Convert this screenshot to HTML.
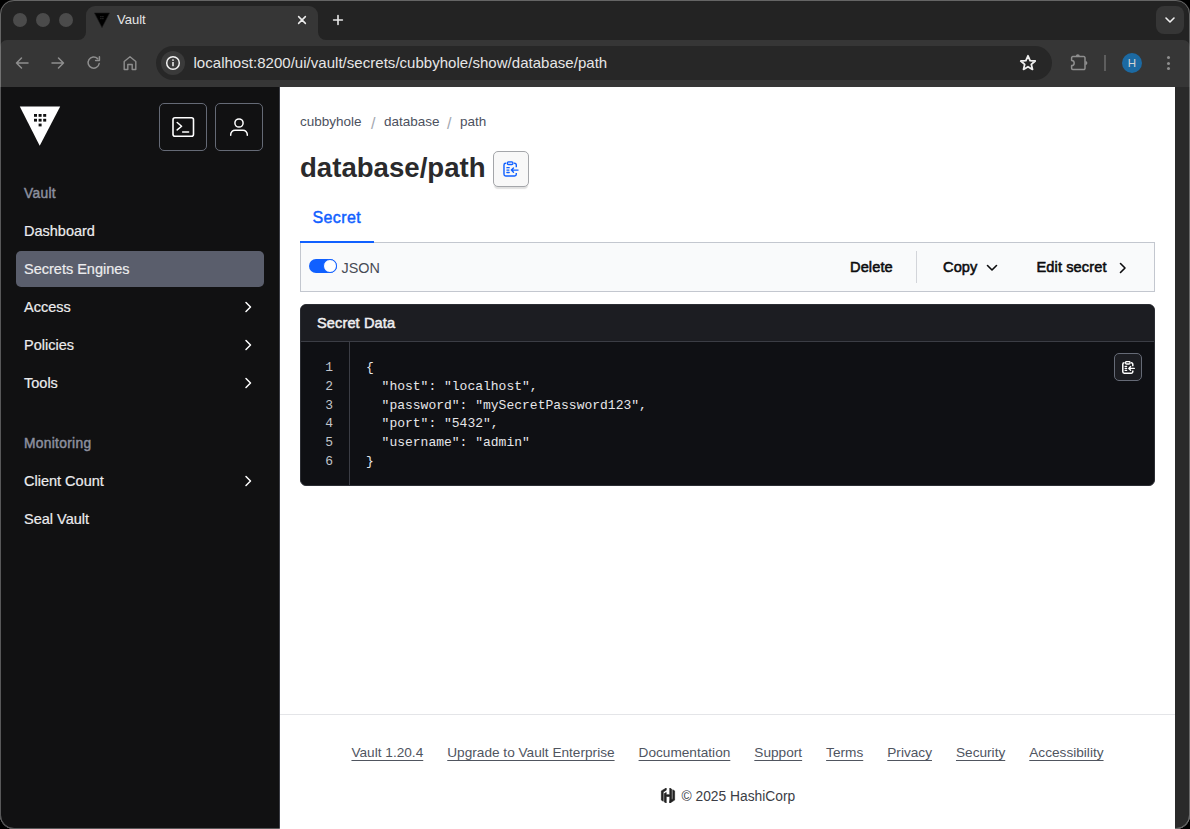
<!DOCTYPE html>
<html><head><meta charset="utf-8">
<style>
*{box-sizing:border-box;margin:0;padding:0}
html,body{width:1190px;height:829px;overflow:hidden;background:#000;font-family:"Liberation Sans",sans-serif}
.abs{position:absolute}
#win{position:absolute;left:0;top:0;width:1190px;height:829px;border-radius:14px;overflow:hidden;background:#232323}
#frame{position:absolute;left:0;top:0;width:1190px;height:829px;border-radius:14px;border:1px solid rgba(255,255,255,0.3);z-index:50;pointer-events:none}
#strip{position:absolute;left:0;top:0;width:1190px;height:39px;background:#232323}
#toolbar{position:absolute;left:0;top:40px;width:1190px;height:47px;background:#363636}
.dot{position:absolute;top:13px;width:14px;height:14px;border-radius:50%;background:#4b4b4b}
#tab{position:absolute;left:86px;top:6px;width:232px;height:34px;background:#363636;border-radius:9px 9px 0 0}
#omni{position:absolute;left:156px;top:46px;width:896px;height:34px;border-radius:17px;background:#272727}
#page{position:absolute;left:0;top:87px;width:1190px;height:742px;background:#fff}
#side{position:absolute;left:0;top:87px;width:280px;height:742px;background:#111112;border-right:1px solid #3b3d45}
#rstrip{position:absolute;left:1175px;top:87px;width:15px;height:742px;background:#2a2a2a}
.nav{position:absolute;left:24px;font-size:14.5px;color:#ececee;line-height:18px;-webkit-text-stroke:0.2px #ececee}
.chev{position:absolute;left:243px;width:10px;height:16px}
.sect{position:absolute;left:24px;font-size:13.8px;line-height:16px;color:#8c909f;-webkit-text-stroke:0.45px #8c909f;letter-spacing:0.3px}
</style></head><body>
<div id="win">
  <div id="strip"></div>
  <div id="toolbar"></div>
  <div class="dot" style="left:13px"></div>
  <div class="dot" style="left:36px"></div>
  <div class="dot" style="left:59px"></div>
  <div id="tab"></div>
  <div class="abs" style="left:78px;top:32px;width:8px;height:8px;background:#363636"></div>
  <div class="abs" style="left:78px;top:32px;width:8px;height:8px;background:#232323;border-bottom-right-radius:8px"></div>
  <div class="abs" style="left:318px;top:32px;width:8px;height:8px;background:#363636"></div>
  <div class="abs" style="left:318px;top:32px;width:8px;height:8px;background:#232323;border-bottom-left-radius:8px"></div>
  <div class="abs" style="left:0px;top:40px;width:8px;height:8px;background:#232323"></div>
  <div class="abs" style="left:0px;top:40px;width:8px;height:8px;background:#363636;border-top-left-radius:7px"></div>
  <div class="abs" style="left:1182px;top:40px;width:8px;height:8px;background:#232323"></div>
  <div class="abs" style="left:1182px;top:40px;width:8px;height:8px;background:#363636;border-top-right-radius:7px"></div>

  <div id="omni"></div>

  <!-- tab -->
  <svg class="abs" style="left:94px;top:12px" width="16" height="16" viewBox="0 0 16 16"><path d="M0.5 1 L15.5 1 L8 15.5 Z" fill="#000" stroke="#1a1a1a" stroke-width="0.6"/><rect x="6.3" y="4" width="1.2" height="1.2" fill="#2c2c2c"/><rect x="8.3" y="4" width="1.2" height="1.2" fill="#2c2c2c"/><rect x="6.3" y="6" width="1.2" height="1.2" fill="#2c2c2c"/><rect x="8.3" y="6" width="1.2" height="1.2" fill="#2c2c2c"/></svg>
  <div id="tabtitle" class="abs" style="left:117px;top:12px;font-size:13px;line-height:16px;color:#e6e6e6">Vault</div>
  <svg class="abs" style="left:296px;top:14px" width="12" height="12" viewBox="0 0 12 12"><path d="M2.6 2.6 L9.4 9.4 M9.4 2.6 L2.6 9.4" stroke="#ececec" stroke-width="1.5" stroke-linecap="round"/></svg>
  <svg class="abs" style="left:331px;top:13px" width="14" height="14" viewBox="0 0 14 14"><path d="M7 2.6 V11.4 M2.6 7 H11.4" stroke="#e8e8e8" stroke-width="1.6" stroke-linecap="round"/></svg>
  <div class="abs" style="left:1156px;top:6px;width:28px;height:28px;border-radius:8px;background:#363636"></div>
  <svg class="abs" style="left:1164px;top:15px" width="12" height="10" viewBox="0 0 12 10"><path d="M2 3 L6 7 L10 3" stroke="#f0f0f0" stroke-width="1.6" fill="none" stroke-linecap="round" stroke-linejoin="round"/></svg>
  <!-- nav -->
  <svg class="abs" style="left:14px;top:55px" width="16" height="16" viewBox="0 0 16 16"><path d="M14 8 H2.5 M7.5 3 L2.5 8 L7.5 13" stroke="#8e8e8e" stroke-width="1.5" fill="none" stroke-linecap="round" stroke-linejoin="round"/></svg>
  <svg class="abs" style="left:50px;top:55px" width="16" height="16" viewBox="0 0 16 16"><path d="M2 8 H13.5 M8.5 3 L13.5 8 L8.5 13" stroke="#8e8e8e" stroke-width="1.5" fill="none" stroke-linecap="round" stroke-linejoin="round"/></svg>
  <svg class="abs" style="left:86px;top:55px" width="16" height="16" viewBox="0 0 16 16"><path d="M13.2 8.5 A5.6 5.6 0 1 1 11.6 3.6" stroke="#8e8e8e" stroke-width="1.5" fill="none" stroke-linecap="round"/><path d="M13.4 1.8 V5.6 H9.6" stroke="#8e8e8e" stroke-width="1.5" fill="none" stroke-linecap="round" stroke-linejoin="round"/></svg>
  <svg class="abs" style="left:122px;top:55px" width="16" height="16" viewBox="0 0 16 16"><path d="M2.2 14.5 V6.5 L8 1.8 L13.8 6.5 V14.5 H10.2 V9.5 H5.8 V14.5 Z" stroke="#8e8e8e" stroke-width="1.4" fill="none" stroke-linejoin="round"/></svg>
  <!-- omnibox -->
  <div class="abs" style="left:161px;top:51px;width:24px;height:24px;border-radius:12px;background:#3a3a3a"></div>
  <svg class="abs" style="left:165px;top:55px" width="16" height="16" viewBox="0 0 16 16"><circle cx="8" cy="8" r="6.3" stroke="#f2f2f2" stroke-width="1.5" fill="none"/><rect x="7.25" y="7" width="1.5" height="4.2" fill="#f2f2f2"/><circle cx="8" cy="5.1" r="0.9" fill="#f2f2f2"/></svg>
  <div id="url" class="abs" style="left:193.5px;top:54px;font-size:15px;letter-spacing:0.03px;line-height:18px;color:#e6e6e6;white-space:nowrap">localhost:8200/ui/vault/secrets/cubbyhole/show/database/path</div>
  <svg class="abs" style="left:1019px;top:54px" width="18" height="18" viewBox="0 0 18 18"><path d="M9 1.8 L11.1 6.6 L16.2 7.0 L12.3 10.4 L13.5 15.4 L9 12.7 L4.5 15.4 L5.7 10.4 L1.8 7.0 L6.9 6.6 Z" stroke="#f0f0f0" stroke-width="1.8" fill="none" stroke-linejoin="round"/></svg>
  <!-- right icons -->
  <svg class="abs" style="left:1064px;top:48px" width="30" height="30" viewBox="0 0 30 30"><path d="M8.8 8.6 H19.8 A1.2 1.2 0 0 1 21 9.8 V20.3 A1.2 1.2 0 0 1 19.8 21.5 H8.8 A1.2 1.2 0 0 1 7.6 20.3 V17.6 A2.6 2.6 0 0 0 7.6 12.4 V9.8 A1.2 1.2 0 0 1 8.8 8.6 Z" stroke="#8e8e8e" stroke-width="1.5" fill="none" stroke-linejoin="round"/><path d="M11.8 8.2 A2 2 0 0 1 15.8 8.2 Z" fill="#8e8e8e"/><path d="M21.4 13 A2 2 0 0 1 21.4 17 Z" fill="#8e8e8e"/></svg>
  <div class="abs" style="left:1104px;top:55px;width:2px;height:16px;background:#5e5e5e"></div>
  <div class="abs" style="left:1122px;top:53px;width:20px;height:20px;border-radius:10px;background:#1c6aa3"></div>
  <div class="abs" style="left:1122px;top:56px;width:20px;text-align:center;font-size:11.5px;line-height:14px;color:#d4d4d4">H</div>
  <div class="abs" style="left:1166.5px;top:55.8px;width:3px;height:3px;border-radius:2px;background:#8e8e8e"></div>
  <div class="abs" style="left:1166.5px;top:61.5px;width:3px;height:3px;border-radius:2px;background:#8e8e8e"></div>
  <div class="abs" style="left:1166.5px;top:67.2px;width:3px;height:3px;border-radius:2px;background:#8e8e8e"></div>
  <div id="page"></div>
  <div id="side"></div>
  <!-- main content -->
  <div id="bc1" class="abs" style="left:300px;top:113px;font-size:13.5px;line-height:17px;color:#4c515e">cubbyhole</div>
  <div id="bcs1" class="abs" style="left:371px;top:113.5px;font-size:16px;line-height:20px;color:#a3a7b0">/</div>
  <div id="bc2" class="abs" style="left:384px;top:113px;font-size:13.5px;line-height:17px;color:#4c515e">database</div>
  <div id="bcs2" class="abs" style="left:447px;top:113.5px;font-size:16px;line-height:20px;color:#a3a7b0">/</div>
  <div id="bc3" class="abs" style="left:460px;top:113px;font-size:13.5px;line-height:17px;color:#4c515e">path</div>
  <div id="title" class="abs" style="left:300px;top:152.3px;font-size:27.6px;line-height:32px;font-weight:bold;color:#2a2a2c">database/path</div>
  <div class="abs" style="left:492.5px;top:151px;width:36px;height:36px;border:1.2px solid #a4a6aa;border-radius:5px;background:#f8f8f8;box-shadow:0 3px 1px -1px rgba(0,0,0,0.12)"></div>
  <svg class="abs" style="left:503.2px;top:160.6px" width="16" height="16" viewBox="0 0 13 13"><path d="M2.6 1.8 H2.2 A1.4 1.4 0 0 0 0.8 3.2 V10.8 A1.4 1.4 0 0 0 2.2 12.2 H9.4 A1.4 1.4 0 0 0 10.8 10.8 V9.8 M10.8 5.0 V3.2 A1.4 1.4 0 0 0 9.4 1.8 H9" stroke="#1060ff" stroke-width="1.15" fill="none"/><rect x="3.5" y="0.7" width="4.6" height="2.2" rx="1" stroke="#1060ff" stroke-width="1.1" fill="#c8d8ff"/><path d="M3.2 5.4 H5.0 M3.2 7.4 H4.8 M3.2 9.4 H5.0 M12.2 7.4 H6.8 M8.5 5.7 L6.8 7.4 L8.5 9.1" stroke="#1060ff" stroke-width="1.15" fill="none" stroke-linecap="round" stroke-linejoin="round"/></svg>
  <div id="tabsecret" class="abs" style="left:312.5px;top:208px;font-size:16px;line-height:19px;color:#1060ff;-webkit-text-stroke:0.45px #1060ff;letter-spacing:0.4px">Secret</div>
  <div class="abs" style="left:300px;top:242px;width:855px;height:50px;background:#f9fafb;border:1px solid #c3c7cf"></div>
  <div class="abs" style="left:300px;top:240.5px;width:74px;height:2.5px;background:#1060ff"></div>
  <div class="abs" style="left:309px;top:258.5px;width:28px;height:14px;border-radius:7px;background:#1060ff"></div>
  <div class="abs" style="left:323px;top:258.5px;width:14px;height:14px;border-radius:7px;background:#fff;border:1px solid #1060ff"></div>
  <div id="json" class="abs" style="left:341.5px;top:258.5px;font-size:14.4px;line-height:18px;color:#474b55">JSON</div>
  <div id="del" class="abs" style="left:850px;top:258px;font-size:14.6px;line-height:18px;color:#0c0c0e;-webkit-text-stroke:0.55px #0c0c0e;letter-spacing:0.1px">Delete</div>
  <div class="abs" style="left:916px;top:251px;width:1px;height:32px;background:#d3d5da"></div>
  <div id="copy" class="abs" style="left:943px;top:258px;font-size:14.6px;line-height:18px;color:#0c0c0e;-webkit-text-stroke:0.55px #0c0c0e;letter-spacing:0.1px">Copy</div>
  <svg class="abs" style="left:984px;top:260px" width="16" height="16" viewBox="0 0 16 16"><path d="M3.5 5.5 L8 10 L12.5 5.5" stroke="#0c0c0e" stroke-width="1.6" fill="none" stroke-linecap="round" stroke-linejoin="round"/></svg>
  <div id="edit" class="abs" style="left:1036.5px;top:258px;font-size:14.6px;line-height:18px;color:#0c0c0e;-webkit-text-stroke:0.55px #0c0c0e;letter-spacing:0.1px">Edit secret</div>
  <svg class="abs" style="left:1115px;top:260px" width="16" height="16" viewBox="0 0 16 16"><path d="M5.5 3.5 L10 8 L5.5 12.5" stroke="#0c0c0e" stroke-width="1.6" fill="none" stroke-linecap="round" stroke-linejoin="round"/></svg>
  <!-- card -->
  <div class="abs" style="left:300px;top:304px;width:855px;height:182px;border-radius:6px;background:#0f1014;overflow:hidden;border:1px solid #2b2d33">
    <div class="abs" style="left:0;top:0;width:855px;height:37px;background:#1c1d22;border-bottom:1px solid #3b3d45"></div>
    <div class="abs" style="left:48px;top:37px;width:1px;height:150px;background:#3b3d45"></div>
  </div>
  <div id="sd" class="abs" style="left:317px;top:314px;font-size:14.6px;line-height:18px;color:#efeff1;-webkit-text-stroke:0.5px #efeff1;letter-spacing:0.1px">Secret Data</div>
  <div id="lnums" class="abs" style="left:300px;top:359px;width:33px;text-align:right;font-family:'Liberation Mono',monospace;font-size:13px;line-height:18.75px;color:#c2c5cb;white-space:pre">1
2
3
4
5
6</div>
  <div id="code" class="abs" style="left:366px;top:359px;font-family:'Liberation Mono',monospace;font-size:13px;line-height:18.75px;color:#e6e6e9;white-space:pre">{
  "host": "localhost",
  "password": "mySecretPassword123",
  "port": "5432",
  "username": "admin"
}</div>
  <div class="abs" style="left:1114px;top:353px;width:28px;height:28px;border:1px solid #656a76;border-radius:5px;background:#1c1d22"></div>
  <svg class="abs" style="left:1122px;top:360.5px" width="13" height="13" viewBox="0 0 13 13"><path d="M2.6 1.8 H2.2 A1.4 1.4 0 0 0 0.8 3.2 V10.8 A1.4 1.4 0 0 0 2.2 12.2 H9.4 A1.4 1.4 0 0 0 10.8 10.8 V9.6 M10.8 5.2 V3.2 A1.4 1.4 0 0 0 9.4 1.8 H9" stroke="#fff" stroke-width="1.5" fill="none"/><rect x="3.5" y="0.6" width="4.6" height="2.4" rx="1.1" stroke="#fff" stroke-width="1.3" fill="none"/><path d="M3.2 5.4 H4.6 M3.2 7.4 H4.6 M3.2 9.4 H4.6 M12.3 7.4 H6.8 M8.6 5.6 L6.8 7.4 L8.6 9.2" stroke="#fff" stroke-width="1.4" fill="none" stroke-linecap="round" stroke-linejoin="round"/></svg>
  <!-- footer -->
  <div class="abs" style="left:280px;top:714px;width:895px;height:1px;background:#e4e5e8"></div>
  <div id="foot" class="abs" style="left:280px;top:744px;width:895px;display:flex;justify-content:center;gap:24px;font-size:13.65px;line-height:17px;color:#50555f">
    <span id="f1" style="text-decoration:underline;text-underline-offset:2.5px">Vault 1.20.4</span>
    <span id="f2" style="text-decoration:underline;text-underline-offset:2.5px">Upgrade to Vault Enterprise</span>
    <span id="f3" style="text-decoration:underline;text-underline-offset:2.5px">Documentation</span>
    <span id="f4" style="text-decoration:underline;text-underline-offset:2.5px">Support</span>
    <span id="f5" style="text-decoration:underline;text-underline-offset:2.5px">Terms</span>
    <span id="f6" style="text-decoration:underline;text-underline-offset:2.5px">Privacy</span>
    <span id="f7" style="text-decoration:underline;text-underline-offset:2.5px">Security</span>
    <span id="f8" style="text-decoration:underline;text-underline-offset:2.5px">Accessibility</span>
  </div>
  <svg class="abs" style="left:659.5px;top:788.2px" width="16" height="15" viewBox="4.6 4 14.8 16"><path d="M10.114 4.094L4.946 7.08v9.839l1.944 1.122V8.203l3.224-1.863zM13.886 4.094v7.045h-3.772V8.81L8.07 9.993v8.86l2.044 1.182v-6.98h3.772v6.85l2.044-1.18V5.27zM19.054 7.08l-1.944-1.122v9.839L13.886 17.66v2.246l5.168-2.986z" fill="#222" stroke="#222" stroke-width="0.7" stroke-linejoin="round"/></svg>
  <div id="copyr" class="abs" style="left:681.5px;top:787.5px;font-size:13.8px;line-height:17px;color:#3b3d45">© 2025 HashiCorp</div>

  <div id="rstrip"></div>
  <!-- sidebar content -->
  <svg class="abs" style="left:19px;top:106px" width="42" height="41" viewBox="0 0 42 41"><path d="M0.8 0.6 H41.2 L20.7 39.8 Z" fill="#fff"/><g fill="#111"><rect x="15" y="8" width="3" height="2.8"/><rect x="19.6" y="8" width="3" height="2.8"/><rect x="24.2" y="8" width="3" height="2.8"/><rect x="15" y="12.8" width="3" height="2.8"/><rect x="19.6" y="12.8" width="3" height="2.8"/><rect x="24.2" y="12.8" width="3" height="2.8"/><rect x="19.6" y="17.6" width="3" height="2.8"/></g></svg>
  <div class="abs" style="left:159px;top:103px;width:48px;height:48px;border:1px solid #656a76;border-radius:5px"></div>
  <div class="abs" style="left:215px;top:103px;width:48px;height:48px;border:1px solid #656a76;border-radius:5px"></div>
  <svg class="abs" style="left:171px;top:115px" width="24" height="24" viewBox="0 0 24 24"><rect x="2" y="2.8" width="20.5" height="18.5" rx="2" stroke="#fff" stroke-width="1.6" fill="none"/><path d="M6.2 7.5 L10.6 11.2 L6.2 14.9" stroke="#fff" stroke-width="1.5" fill="none" stroke-linecap="round" stroke-linejoin="round"/><path d="M11.6 16.9 H17.6" stroke="#fff" stroke-width="1.5" stroke-linecap="round"/></svg>
  <svg class="abs" style="left:227px;top:115px" width="24" height="24" viewBox="0 0 24 24"><circle cx="12" cy="8" r="4.1" stroke="#fff" stroke-width="1.5" fill="none"/><path d="M3.7 20.3 V19.6 A4.3 4.3 0 0 1 8 15.3 H16 A4.3 4.3 0 0 1 20.3 19.6 V20.3" stroke="#fff" stroke-width="1.5" fill="none" stroke-linecap="round"/></svg>
  <div id="s_vault" class="sect" style="top:186px">Vault</div>
  <div id="s_dash" class="nav" style="top:222px">Dashboard</div>
  <div class="abs" style="left:16px;top:251px;width:248px;height:36px;border-radius:5px;background:#5a5e6c"></div>
  <div id="s_se" class="nav" style="top:260px">Secrets Engines</div>
  <div id="s_acc" class="nav" style="top:298px">Access</div>
  <div id="s_pol" class="nav" style="top:336px">Policies</div>
  <div id="s_tools" class="nav" style="top:374px">Tools</div>
  <div id="s_mon" class="sect" style="top:436px">Monitoring</div>
  <div id="s_cc" class="nav" style="top:472px">Client Count</div>
  <div id="s_seal" class="nav" style="top:510px">Seal Vault</div>
  <svg class="chev" style="top:299px" viewBox="0 0 10 16"><path d="M3 3.5 L7.5 8 L3 12.5" stroke="#fff" stroke-width="1.5" fill="none" stroke-linecap="round" stroke-linejoin="round"/></svg>
  <svg class="chev" style="top:337px" viewBox="0 0 10 16"><path d="M3 3.5 L7.5 8 L3 12.5" stroke="#fff" stroke-width="1.5" fill="none" stroke-linecap="round" stroke-linejoin="round"/></svg>
  <svg class="chev" style="top:375px" viewBox="0 0 10 16"><path d="M3 3.5 L7.5 8 L3 12.5" stroke="#fff" stroke-width="1.5" fill="none" stroke-linecap="round" stroke-linejoin="round"/></svg>
  <svg class="chev" style="top:473px" viewBox="0 0 10 16"><path d="M3 3.5 L7.5 8 L3 12.5" stroke="#fff" stroke-width="1.5" fill="none" stroke-linecap="round" stroke-linejoin="round"/></svg>

</div>
<div id="frame"></div>
</body></html>
